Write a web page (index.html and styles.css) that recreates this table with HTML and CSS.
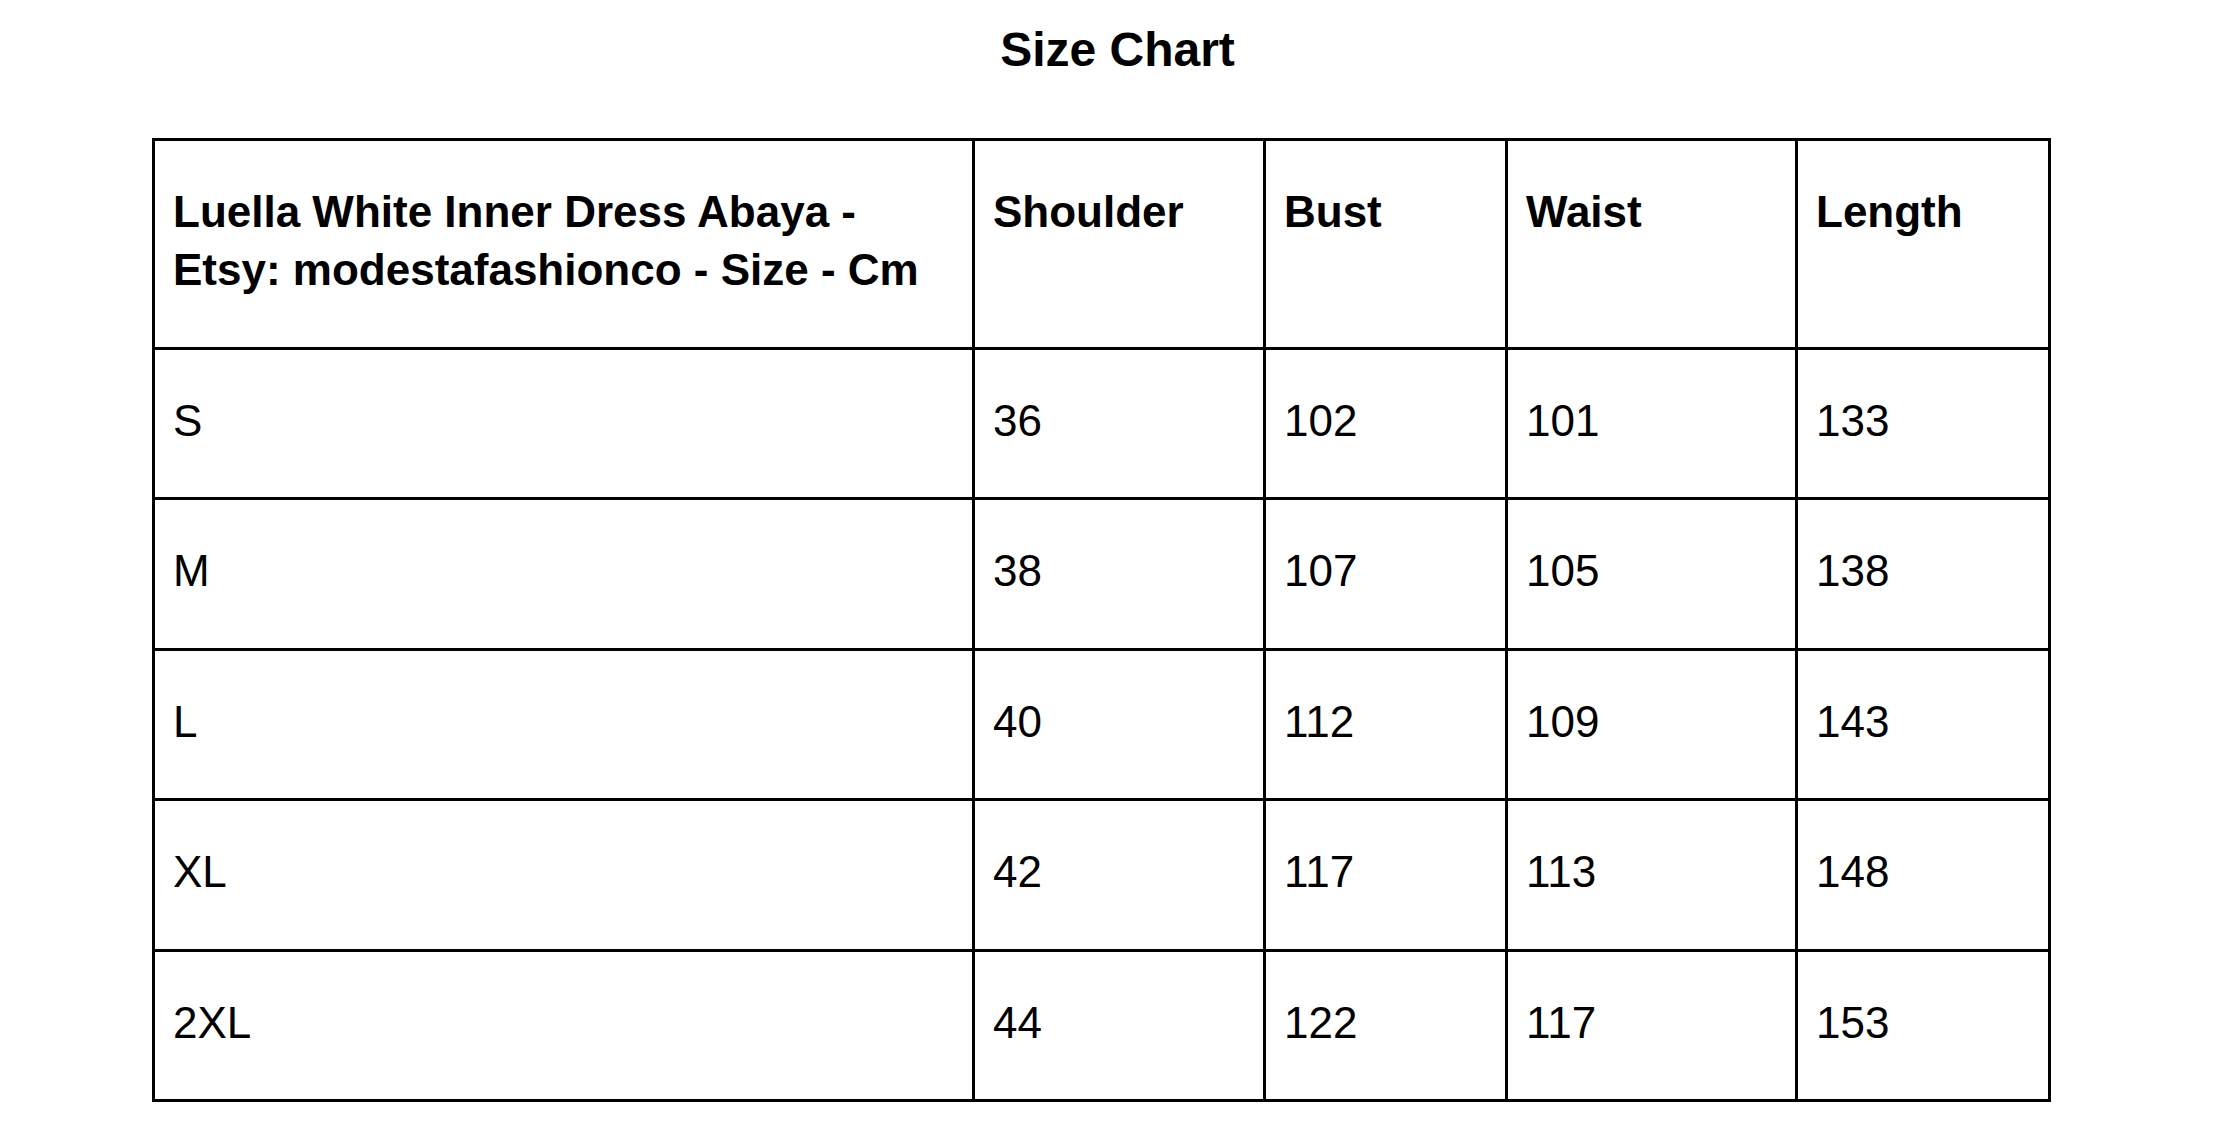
FILE: index.html
```html
<!DOCTYPE html>
<html lang="en">
<head>
<meta charset="utf-8">
<title>Size Chart</title>
<link rel="stylesheet" href="styles.css">
</head>
<body>
<main class="page">
  <h1 class="title">Size Chart</h1>
  <div class="table-wrap">
    <table class="chart">
      <thead>
        <tr>
          <th class="c1">Luella White Inner Dress Abaya - Etsy: modestafashionco - Size - Cm</th>
          <th class="c2">Shoulder</th>
          <th class="c3">Bust</th>
          <th class="c4">Waist</th>
          <th class="c5">Length</th>
        </tr>
      </thead>
      <tbody>
        <tr><td>S</td><td>36</td><td>102</td><td>101</td><td>133</td></tr>
        <tr><td>M</td><td>38</td><td>107</td><td>105</td><td>138</td></tr>
        <tr><td>L</td><td>40</td><td>112</td><td>109</td><td>143</td></tr>
        <tr><td>XL</td><td>42</td><td>117</td><td>113</td><td>148</td></tr>
        <tr><td>2XL</td><td>44</td><td>122</td><td>117</td><td>153</td></tr>
      </tbody>
    </table>
  </div>
</main>
</body>
</html>
```

FILE: styles.css
```css
html, body {
  margin: 0;
  padding: 0;
  background: #ffffff;
}

body {
  font-family: "Liberation Sans", Arial, sans-serif;
  color: #000000;
}

.page {
  width: 2235px;
}

.title {
  margin: 22px 0 0 0;
  font-size: 48px;
  font-weight: 700;
  line-height: normal;
  text-align: center;
}

.table-wrap {
  padding-left: 152px;
  margin-top: 61px;
}

.chart {
  table-layout: fixed;
  border-collapse: separate;
  border-spacing: 0;
  width: 1899px;
  border-left: 3px solid #000;
  border-top: 3px solid #000;
  font-size: 44px;
  line-height: 58px;
}

.chart th,
.chart td {
  box-sizing: border-box;
  border-right: 3px solid #000;
  border-bottom: 3px solid #000;
  padding: 42px 18px 47.5px 18px;
  text-align: left;
  vertical-align: top;
}

.chart th {
  font-weight: 700;
}

.chart td {
  font-weight: 400;
}

.c1 { width: 820px; }
.c2 { width: 291px; }
.c3 { width: 242px; }
.c4 { width: 290px; }
.c5 { width: 253px; }
```
